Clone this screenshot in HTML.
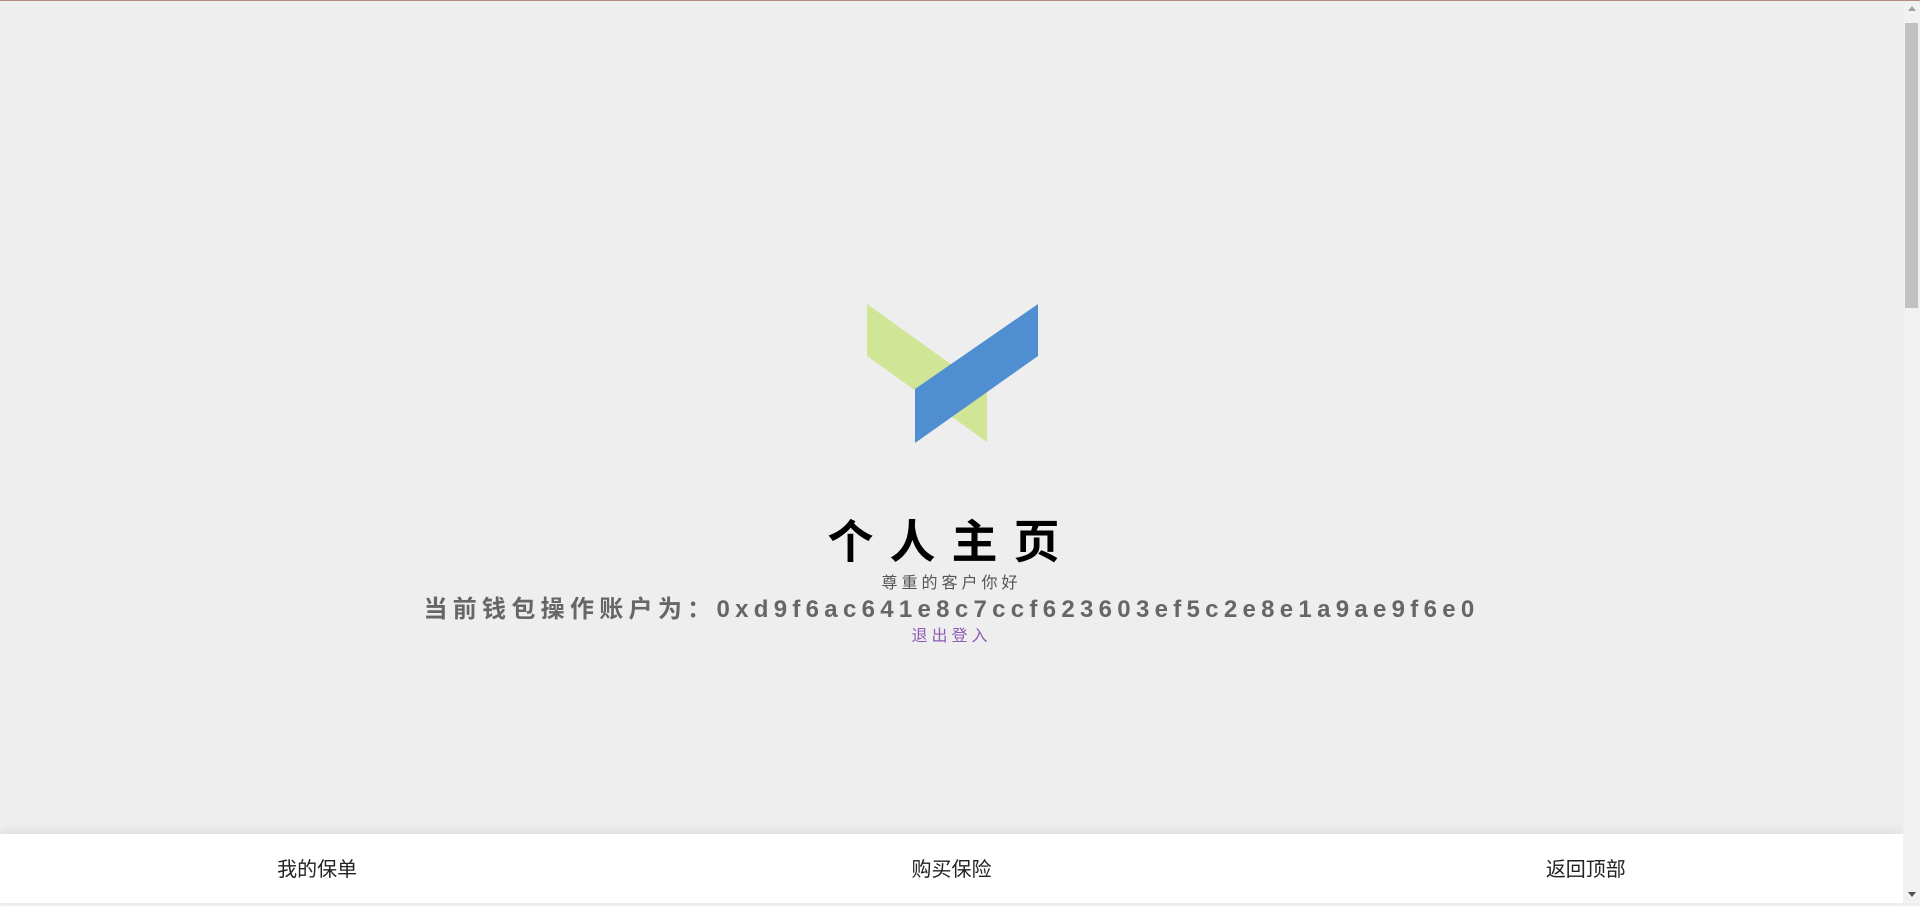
<!DOCTYPE html>
<html><head><meta charset="utf-8"><style>
html,body{margin:0;padding:0;}
body{width:1920px;height:903px;background:#eee;position:relative;overflow:hidden;font-family:"Liberation Sans","Noto Sans CJK SC",sans-serif;text-align:center;}
.topline{position:absolute;left:0;top:0;width:1920px;height:1px;background:#b58b80;}
.title,.sub,.addr,.out{text-align:center;position:absolute;left:0;width:1903px;}
.title{top:512px;font-size:46px;font-weight:bold;letter-spacing:16px;color:#000;line-height:60px;}
.sub{top:573px;font-size:16px;letter-spacing:4px;color:#555;line-height:22px;}
.addr{top:594px;font-size:24px;font-weight:bold;letter-spacing:5.3px;color:#666;line-height:32px;}
.out{top:626px;font-size:16px;letter-spacing:4px;color:#8e5bb5;line-height:22px;}
.bar{position:absolute;left:0;top:834px;width:1903px;height:69px;background:#fff;box-shadow:0 -4px 8px rgba(0,0,0,0.06);display:flex;}
.bar div{flex:1;text-align:center;line-height:72px;font-size:20px;color:#222;}
.sb{position:absolute;right:0;top:1px;width:17px;height:902px;background:#f1f1f1;}
.thumb{position:absolute;right:2px;top:22px;width:13px;height:285px;background:#c1c1c1;}
.arr{position:absolute;right:4px;width:0;height:0;border-left:4px solid transparent;border-right:4px solid transparent;}
</style></head><body>
<div class="topline"></div>
<svg style="position:absolute;left:0;top:0" width="1903" height="500">
<polygon points="867,304 987,390 987,442 867,356" fill="#d1e596"/>
<polygon points="915,389 1038,304 1038,356 915,443" fill="#4f8ed1"/>
</svg>
<div class="title">个人主页</div>
<div class="sub">尊重的客户你好</div>
<div class="addr">当前钱包操作账户为：0xd9f6ac641e8c7ccf623603ef5c2e8e1a9ae9f6e0</div>
<div class="out">退出登入</div>
<div class="bar"><div>我的保单</div><div>购买保险</div><div>返回顶部</div></div>
<div class="sb"><div class="arr" style="top:5px;border-bottom:5px solid #a3a3a3"></div><div class="thumb"></div><div class="arr" style="bottom:6px;border-top:5px solid #505050"></div></div>
</body></html>
